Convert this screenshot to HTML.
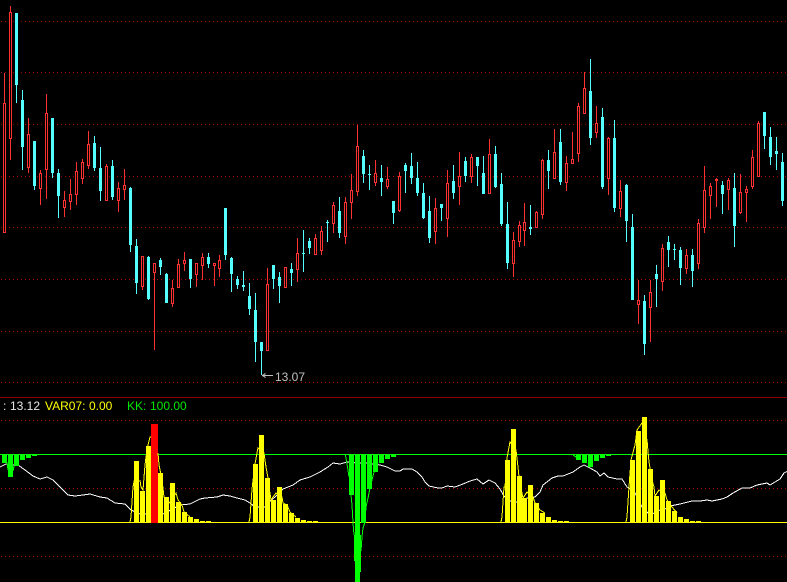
<!DOCTYPE html>
<html>
<head>
<meta charset="utf-8">
<style>
html,body{margin:0;padding:0;background:#000;width:787px;height:582px;overflow:hidden}
svg{display:block;position:absolute;left:0;top:0}
text{font-family:"Liberation Sans",sans-serif;font-size:12px}
</style>
</head>
<body>
<svg width="787" height="582" viewBox="0 0 787 582" shape-rendering="crispEdges">
<rect width="787" height="582" fill="#000"/>
<!-- grid -->
<g stroke="#a80000" stroke-width="1" stroke-dasharray="1 3" fill="none">
<path d="M1 21.5H787M1 72.5H787M1 124.5H787M1 176.5H787M1 227.5H787M1 279.5H787M1 331.5H787M1 382.5H787M1 420.5H787M1 488.5H787M1 556.5H787"/>
</g>
<path d="M0 397.5H787" stroke="#900000" stroke-width="1"/>

<!-- red wicks -->
<path stroke="#ff3232" stroke-width="1" fill="none" d="M4.5 73V233M10.5 6V160M28.5 118V173M40.5 170V205M46.5 94V199M64.5 191V217M70.5 179V210M76.5 162V205M82.5 159V184M88.5 131V169M106.5 164V201M118.5 182V212M124.5 169V200M142.5 256V290M154.5 263V350M172.5 280V307M178.5 259V288M184.5 252V271M196.5 263V287M202.5 253V280M214.5 263V286M219.5 255V277M267.5 268V351M285.5 267V288M297.5 238V282M315.5 234V255M321.5 226V255M333.5 202V233M345.5 197V244M351.5 174V219M357.5 125V196M375.5 160V186M387.5 167V189M399.5 172V212M435.5 198V244M447.5 170V237M459.5 152V205M471.5 154V183M489.5 139V194M513.5 232V277M519.5 221V247M524.5 203V246M536.5 211V228M542.5 159V219M554.5 129V179M566.5 156V191M572.5 132V164M578.5 103V162M584.5 72V114M596.5 106V138M608.5 137V195M620.5 180V217M638.5 280V324M650.5 280V342M662.5 244V291M686.5 249V274M698.5 219V269M704.5 166V233M710.5 183V219M716.5 178V207M728.5 178V210M740.5 174V214M746.5 186V222M752.5 150V189M758.5 121V177"/>
<!-- red hollow bodies -->
<path stroke="#ff3232" stroke-width="1" fill="#000" d="M3.5 103.5h2V232.5h-2zM9.5 12.5h2V138.5h-2zM27.5 134.5h2V167.5h-2zM39.5 173.5h2V188.5h-2zM45.5 113.5h2V169.5h-2zM63.5 200.5h2V207.5h-2zM69.5 194.5h2V201.5h-2zM75.5 171.5h2V194.5h-2zM81.5 162.5h2V178.5h-2zM87.5 144.5h2V165.5h-2zM105.5 166.5h2V200.5h-2zM117.5 188.5h2V200.5h-2zM123.5 185.5h2V189.5h-2zM141.5 256.5h2V286.5h-2zM153.5 263.5h2V272.5h-2zM171.5 288.5h2V303.5h-2zM177.5 264.5h2V287.5h-2zM183.5 260.5h2V263.5h-2zM195.5 263.5h2V274.5h-2zM201.5 257.5h2V265.5h-2zM213.5 263.5h2V265.5h-2zM218.5 260.5h2V268.5h-2zM266.5 284.5h2V350.5h-2zM284.5 267.5h2V287.5h-2zM296.5 253.5h2V269.5h-2zM314.5 238.5h2V254.5h-2zM320.5 231.5h2V250.5h-2zM332.5 205.5h2V223.5h-2zM344.5 202.5h2V236.5h-2zM350.5 190.5h2V202.5h-2zM356.5 146.5h2V191.5h-2zM374.5 173.5h2V182.5h-2zM386.5 179.5h2V186.5h-2zM398.5 176.5h2V210.5h-2zM434.5 208.5h2V231.5h-2zM446.5 183.5h2V218.5h-2zM458.5 176.5h2V186.5h-2zM470.5 157.5h2V176.5h-2zM488.5 154.5h2V193.5h-2zM512.5 240.5h2V263.5h-2zM518.5 225.5h2V241.5h-2zM523.5 222.5h2V230.5h-2zM535.5 212.5h2V227.5h-2zM541.5 160.5h2V214.5h-2zM553.5 152.5h2V178.5h-2zM565.5 163.5h2V182.5h-2zM571.5 159.5h2V163.5h-2zM577.5 106.5h2V153.5h-2zM583.5 88.5h2V113.5h-2zM595.5 123.5h2V132.5h-2zM607.5 138.5h2V178.5h-2zM619.5 191.5h2V208.5h-2zM637.5 300.5h2V304.5h-2zM649.5 292.5h2V307.5h-2zM661.5 248.5h2V281.5h-2zM685.5 255.5h2V268.5h-2zM697.5 223.5h2V263.5h-2zM703.5 190.5h2V227.5h-2zM709.5 186.5h2V195.5h-2zM715.5 179.5h2V180.5h-2zM727.5 180.5h2V189.5h-2zM739.5 192.5h2V212.5h-2zM745.5 189.5h2V192.5h-2zM751.5 157.5h2V186.5h-2zM757.5 123.5h2V176.5h-2z"/>

<!-- cyan wicks -->
<path stroke="#54ffff" stroke-width="1" fill="none" d="M16.5 13V103M22.5 90V170M34.5 141V190M52.5 118V178M58.5 169V218M94.5 136V171M100.5 147V201M112.5 160V200M130.5 187V252M136.5 239V294M148.5 256V300M160.5 258V275M166.5 273V303M190.5 259V288M208.5 253V268M225.5 208V260M231.5 257V292M237.5 276V289M243.5 271V291M249.5 283V315M255.5 293V362M261.5 342V375M273.5 265V289M279.5 272V303M291.5 263V286M303.5 230V272M309.5 238V254M327.5 220V242M339.5 197V238M363.5 150V183M369.5 165V190M381.5 165V196M393.5 201V224M405.5 163V193M411.5 153V184M417.5 162V196M423.5 183V219M429.5 196V243M441.5 204V221M453.5 165V199M465.5 157V182M477.5 157V186M483.5 156V194M495.5 146V188M501.5 173V226M507.5 202V269M530.5 205V235M548.5 150V189M560.5 129V185M590.5 59V145M602.5 108V189M614.5 120V212M626.5 184V242M632.5 214V300M644.5 295V355M656.5 265V307M668.5 236V267M674.5 244V260M680.5 247V285M692.5 249V287M722.5 181V214M734.5 173V247M764.5 112V149M770.5 127V165M776.5 137V170M782.5 153V206"/>
<!-- cyan bodies -->
<path fill="#54ffff" d="M15 13h3V85h-3zM21 100h3V147h-3zM33 141h3V186h-3zM51 118h3V173h-3zM57 173h3V196h-3zM93 143h3V168h-3zM99 168h3V191h-3zM111 166h3V197h-3zM129 188h3V245h-3zM135 246h3V283h-3zM147 257h3V299h-3zM159 260h3V267h-3zM165 274h3V303h-3zM189 259h3V279h-3zM207 257h3V264h-3zM224 208h3V255h-3zM230 258h3V274h-3zM236 279h3V285h-3zM242 285h3V287h-3zM248 296h3V309h-3zM254 310h3V342h-3zM260 342h3V351h-3zM272 265h3V279h-3zM278 277h3V286h-3zM290 269h3V273h-3zM302 253h3V254h-3zM308 241h3V248h-3zM326 222h3V223h-3zM338 211h3V233h-3zM362 156h3V174h-3zM368 174h3V175h-3zM380 178h3V182h-3zM392 201h3V213h-3zM404 165h3V171h-3zM410 166h3V178h-3zM416 178h3V193h-3zM422 193h3V218h-3zM428 211h3V238h-3zM440 204h3V208h-3zM452 181h3V193h-3zM464 161h3V176h-3zM476 157h3V166h-3zM482 173h3V194h-3zM494 154h3V187h-3zM500 184h3V224h-3zM506 224h3V263h-3zM529 227h3V229h-3zM547 160h3V171h-3zM559 142h3V182h-3zM589 91h3V138h-3zM601 117h3V187h-3zM613 138h3V208h-3zM625 185h3V221h-3zM631 227h3V300h-3zM643 301h3V344h-3zM655 274h3V279h-3zM667 242h3V250h-3zM673 249h3V250h-3zM679 250h3V268h-3zM691 255h3V271h-3zM721 185h3V194h-3zM733 188h3V226h-3zM763 112h3V136h-3zM769 137h3V157h-3zM775 151h3V154h-3zM781 162h3V201h-3z"/>

<!-- low price marker -->
<path stroke="#c0c0c0" stroke-width="1" fill="none" d="M262 375.5H273M262.5 375.5l3 -2M262.5 375.5l3 2"/>
<text x="275" y="381" fill="#c0c0c0">13.07</text>

<!-- indicator text -->
<text x="3" y="410" fill="#e6e6e6">:</text>
<text x="10" y="410" fill="#e6e6e6">13.12</text>
<text x="45" y="410" fill="#ffff00">VAR07:</text>
<text x="89" y="410" fill="#ffff00">0.00</text>
<text x="127" y="410" fill="#00e600">KK:</text>
<text x="150" y="410" fill="#00e600">100.00</text>

<!-- white line -->
<polyline fill="none" stroke="#ffffff" stroke-width="1" points="0,467 6,464 10,465 18,465 25,470 33,476 40,479 47,477 53,480 60,487 68,495 75,496 83,495 90,494 100,497 107,498 115,503 125,504 131,510 140,514 163,514 180,505 190,504 200,499 205,498 217,497 223,495 230,496 237,498 245,500 250,503 255,507 265,507 270,501 275,497 283,489 293,485 300,480 310,477 320,472 328,467 333,463 340,464 347,462 357,463 367,463 380,465 387,467 395,471 400,471 403,469 412,469 417,472 422,477 425,482 429,486 438,488 442,488 447,486 455,487 463,484 470,481 477,479 483,484 489,480 495,483 500,489 504,496 510,501 517,502 527,498 535,497 540,492 543,485 552,478 558,476 563,476 573,472 580,467 584,465 590,468 597,472 600,476 604,473 608,477 617,479 622,479 627,487 634,491 642,507 650,515 660,510 665,509 670,506 680,504 692,501 700,501 707,500 712,501 722,499 727,497 733,493 742,488 750,488 757,485 767,483 770,485 780,479 784,473 790,470"/>

<!-- green curve & bars -->
<path stroke="#00ff00" stroke-width="1" fill="none" d="M0 454.5H787"/>
<path stroke="#ffff00" stroke-width="1" fill="none" d="M0 522.5H787"/>

<path fill="#00ff00" d="M2 454h5v9H2zM8 454h5v23H8zM14 454h5v12h-5zM20 454h5v6h-5zM26 454h5v4h-5zM32 454h5v2h-5zM38 454h5v1h-5zM349 454h5v41h-5zM355 454h5v128h-5zM361 454h5v69h-5zM367 454h5v35h-5zM373 454h5v18h-5zM379 454h5v9h-5zM385 454h5v5h-5zM391 454h5v3h-5zM397 454h5v1h-5zM354 535h7v26h-7zM356 561h5v11h-5zM576 454h5v6h-5zM582 454h5v9h-5zM588 454h5v13h-5zM594 454h5v7h-5zM600 454h5v4h-5zM606 454h5v2h-5zM612 454h5v1h-5z"/>
<polyline fill="none" stroke="#00ff00" stroke-width="1" points="345,454 346,458 348,470 349,477"/>
<polyline fill="none" stroke="#00ff00" stroke-width="1" points="351,495 352,505 353,523 354,535"/>
<polyline fill="none" stroke="#00ff00" stroke-width="1" points="361,551 362,537 363,528 365,522 366,507 368,498 370,488 372,480 374,472"/>
<polyline fill="none" stroke="#00ff00" stroke-width="1" points="573,455 576,457"/>
<polyline fill="none" stroke="#00ff00" stroke-width="1" points="7,462 8,470"/>
<polyline fill="none" stroke="#00ff00" stroke-width="1" points="13,471 14,466"/>

<!-- yellow bars and curves -->
<path fill="#ffff00" d="M134 461h5v62h-5zM140 491h5v32h-5zM146 446h5v77h-5zM158 473h5v50h-5zM164 497h5v26h-5zM170 483h5v40h-5zM176 502h5v21h-5zM182 512h5v11h-5zM188 517h5v6h-5zM194 519h5v4h-5zM200 521h5v2h-5zM206 521h5v2h-5zM253 464h5v59h-5zM259 435h5v88h-5zM265 478h5v45h-5zM271 500h5v23h-5zM277 487h5v36h-5zM283 504h5v19h-5zM289 513h5v10h-5zM295 518h5v5h-5zM301 520h5v3h-5zM307 521h5v2h-5zM313 521h5v2h-5zM505 460h5v63h-5zM511 429h5v94h-5zM517 476h5v47h-5zM522 498h5v25h-5zM528 485h5v38h-5zM534 503h5v20h-5zM540 513h5v10h-5zM546 517h5v6h-5zM552 520h5v3h-5zM558 521h5v2h-5zM564 521h5v2h-5zM630 460h5v63h-5zM636 431h5v92h-5zM642 417h5v106h-5zM648 469h5v54h-5zM654 496h5v27h-5zM660 480h5v43h-5zM666 501h5v22h-5zM672 511h5v12h-5zM678 517h5v6h-5zM684 519h5v4h-5zM690 521h5v2h-5zM696 521h5v2h-5z"/>
<rect x="151" y="424" width="7" height="99" fill="#ff0000"/>
<g fill="none" stroke="#ffff00" stroke-width="1">
<polyline points="130,522 131,517 133,487 135,477"/>
<polyline points="140,480 141,487 143,490 145,465 146,457 148,445 150,437 151,437"/>
<polyline points="158,453 159,465 162,480 164,497 170,503 176,493 178,500 182,505 184,512 190,517"/>
<polyline points="249,522 250,517 252,489 255,464 257,453 258,448 264,453 266,467 268,478 269,487 271,500 273,497 276,493 282,497 283,503 287,505 290,512 296,517"/>
<polyline points="501,522 502,517 504,487 505,487 507,458 510,442 516,450 518,467 520,487 522,493 523,498 527,492 533,497 535,503 540,510 545,513"/>
<polyline points="626,522 627,517 629,487 631,460 635,445 637,430 642,423 647,440 649,462 652,480 654,487 655,496 659,490 665,493 667,500 672,507 677,513"/>
</g>
</svg>
</body>
</html>
